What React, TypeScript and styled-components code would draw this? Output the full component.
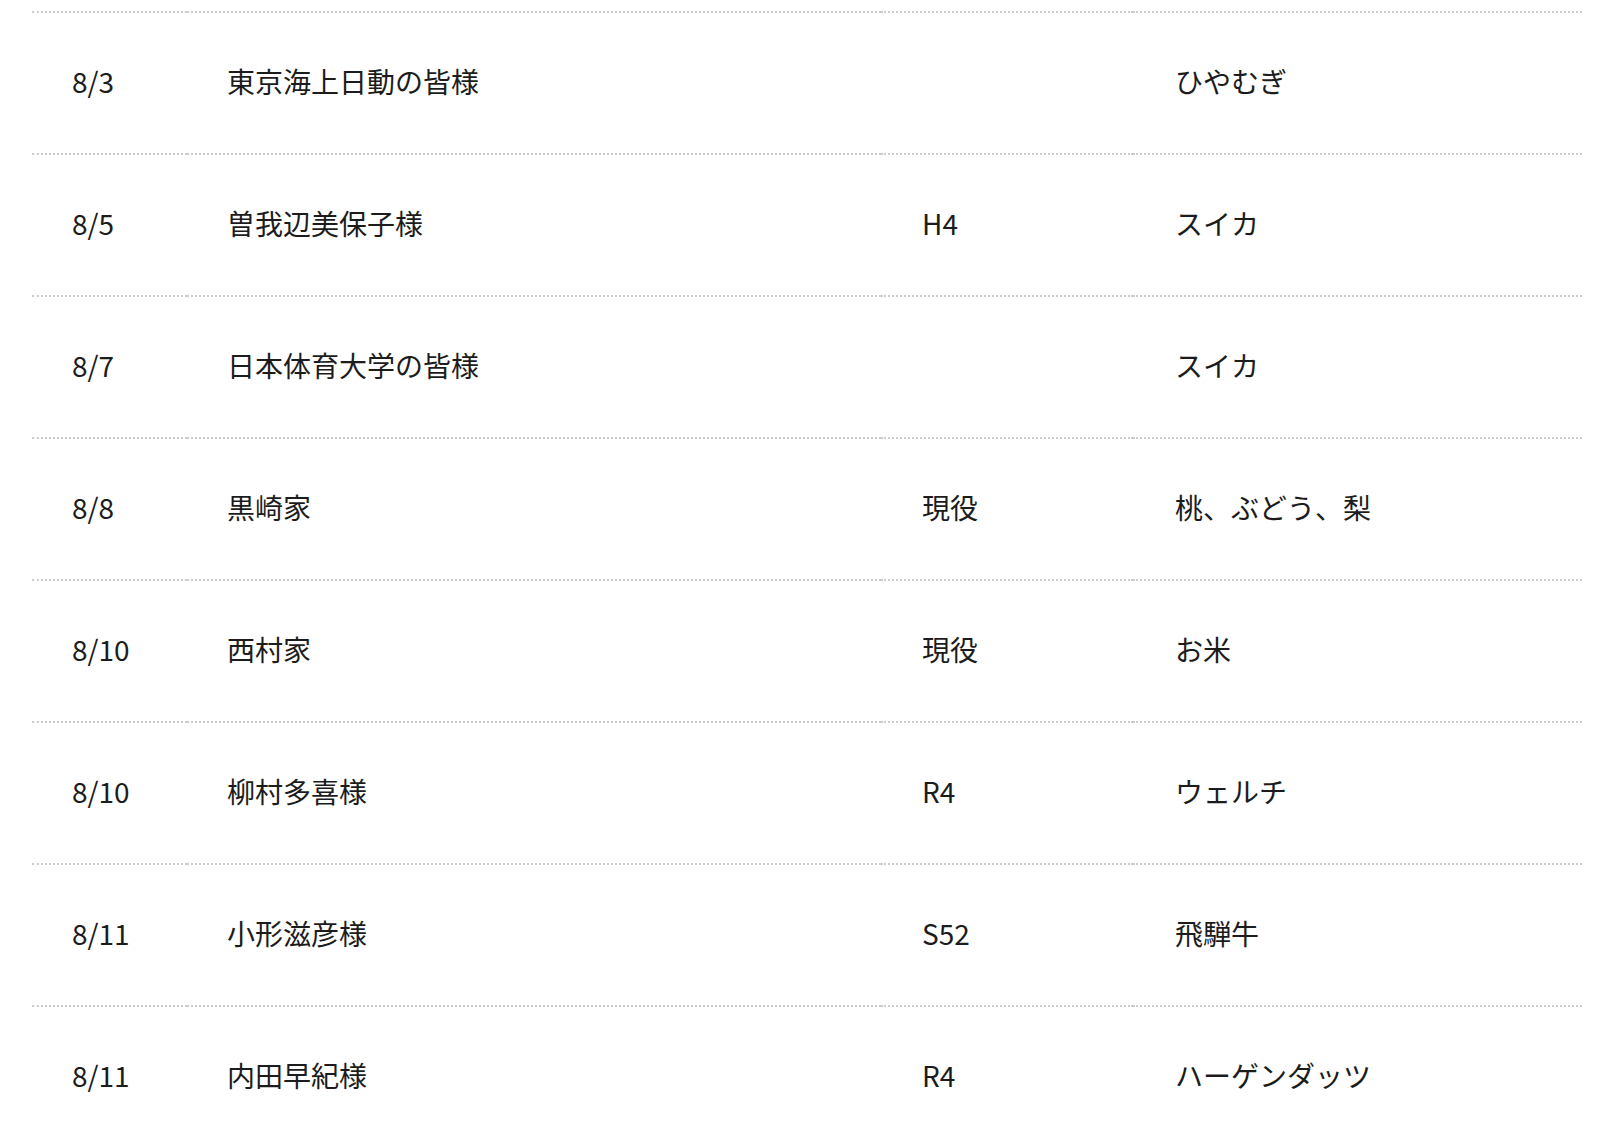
import React from "react";
import styled, { createGlobalStyle } from "styled-components";

const GlobalStyle = createGlobalStyle`
  html, body {
    margin: 0;
    padding: 0;
    background: #ffffff;
  }
  body {
    font-family: "Noto Sans CJK JP", "Noto Sans", sans-serif;
    color: #1c1c1c;
  }
`;

const Wrapper = styled.div`
  padding: 11px 26px 0 32px;
`;

const Table = styled.table`
  width: 1550px;
  border-collapse: separate;
  border-spacing: 0;
  table-layout: fixed;
`;

const Col = styled.col<{ $w: number }>`
  width: ${(p) => p.$w}px;
`;

const Cell = styled.td<{ $pl?: number }>`
  box-sizing: border-box;
  height: 142px;
  padding: 0 40px 5px ${(p) => p.$pl ?? 40}px;
  border-top: 2px dotted #cccccc;
  vertical-align: middle;
  font-size: 28px;
  line-height: 1.5;
  color: #1c1c1c;
  white-space: nowrap;
`;

type Row = { date: string; name: string; year: string; gift: string };

const rows: Row[] = [
  { date: "8/3", name: "東京海上日動の皆様", year: "", gift: "ひやむぎ" },
  { date: "8/5", name: "曽我辺美保子様", year: "H4", gift: "スイカ" },
  { date: "8/7", name: "日本体育大学の皆様", year: "", gift: "スイカ" },
  { date: "8/8", name: "黒崎家", year: "現役", gift: "桃、ぶどう、梨" },
  { date: "8/10", name: "西村家", year: "現役", gift: "お米" },
  { date: "8/10", name: "柳村多喜様", year: "R4", gift: "ウェルチ" },
  { date: "8/11", name: "小形滋彦様", year: "S52", gift: "飛騨牛" },
  { date: "8/11", name: "内田早紀様", year: "R4", gift: "ハーゲンダッツ" },
];

export default function App() {
  return (
    <>
      <GlobalStyle />
      <Wrapper>
        <Table>
          <colgroup>
            <Col $w={155} />
            <Col $w={694} />
            <Col $w={252} />
            <Col $w={449} />
          </colgroup>
          <tbody>
            {rows.map((r, i) => (
              <tr key={i}>
                <Cell>{r.date}</Cell>
                <Cell>{r.name}</Cell>
                <Cell $pl={41}>{r.year}</Cell>
                <Cell $pl={42}>{r.gift}</Cell>
              </tr>
            ))}
          </tbody>
        </Table>
      </Wrapper>
    </>
  );
}
